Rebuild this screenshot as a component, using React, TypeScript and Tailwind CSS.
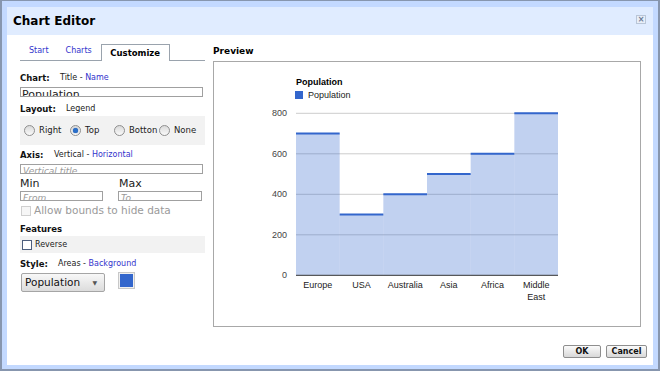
import React from 'react';

const UI = { fontFamily: '"DejaVu Sans", Verdana, sans-serif' };
const ARIAL = '"Liberation Sans", Arial, sans-serif';

const DATA = [
  { label: ['Europe'], value: 700 },
  { label: ['USA'], value: 300 },
  { label: ['Australia'], value: 400 },
  { label: ['Asia'], value: 500 },
  { label: ['Africa'], value: 600 },
  { label: ['Middle', 'East'], value: 800 },
];

function Radio({ checked, label, width }: { checked?: boolean; label: string; width: string }) {
  return (
    <div className={`flex items-center gap-[4px] ${width}`}>
      <span className="flex h-[11px] w-[11px] items-center justify-center rounded-full border border-[#8f8f8f] bg-gradient-to-b from-[#d9d9d9] to-[#fafafa]">
        {checked && <span className="h-[5px] w-[5px] rounded-full bg-[#2a6fc9] shadow-[0_0_1px_#1a4d9a]" />}
      </span>
      <span className="text-[8.5px] text-[#222]">{label}</span>
    </div>
  );
}

function Label({ title, children }: { title: string; children?: React.ReactNode }) {
  return (
    <div className="flex h-[12px] items-center leading-[12px]">
      <span className="w-[40px] shrink-0 text-[8.5px] font-bold text-[#111]">{title}</span>
      {children}
    </div>
  );
}

function Chart() {
  const left = 82;
  const bw = 262 / 6;
  const y = (v: number) => 213.3 - v * 0.2025;
  return (
    <svg width="428" height="264" viewBox="0 0 428 264" style={{ fontFamily: ARIAL }}>
      <text x="82" y="23" fontSize="9" fontWeight="bold" fill="#000">Population</text>
      <rect x="81" y="29" width="8" height="8" fill="#3366cc" />
      <text x="94" y="36" fontSize="9" fill="#222">Population</text>
      {[800, 600, 400, 200].map((v) => (
        <line key={v} x1={left} x2={344} y1={y(v)} y2={y(v)} stroke="#cccccc" strokeWidth="1" />
      ))}
      {[800, 600, 400, 200, 0].map((v) => (
        <text key={v} x="73" y={y(v) + 3} fontSize="9" textAnchor="end" fill="#444">
          {v}
        </text>
      ))}
      {DATA.map((d, i) => (
        <g key={i}>
          <rect x={left + i * bw} y={y(d.value)} width={bw} height={y(0) - y(d.value)} fill="#3366cc" fillOpacity="0.3" />
          <line x1={left + i * bw} x2={left + (i + 1) * bw} y1={y(d.value)} y2={y(d.value)} stroke="#3366cc" strokeWidth="2" />
          {d.label.map((l, j) => (
            <text key={l} x={left + i * bw + bw / 2} y={226 + j * 12} fontSize="9" textAnchor="middle" fill="#222">
              {l}
            </text>
          ))}
        </g>
      ))}
      <line x1={left} x2={344} y1={y(0)} y2={y(0)} stroke="#333" strokeWidth="1" />
    </svg>
  );
}

export default function App() {
  return (
    <div className="h-[373px] w-[660px] bg-white" style={UI}>
      <div className="flex h-[371px] w-[660px] flex-col border-x-2 border-t border-b-2 border-[#8796ae] bg-[#c3d9ff] px-[5px] pt-[6px] pb-[4px]">
        {/* Title bar */}
        <div className="flex h-[28px] items-center justify-between bg-[#e0ecff] pr-[7px] pl-[6px]">
          <span className="text-[12px] font-bold text-black">Chart Editor</span>
          <span className="mb-[3px] flex h-[9px] w-[10px] items-center justify-center border border-[#b9c6d8] bg-[#e8eef8] text-[8px] leading-none font-bold text-[#6a7a95]">
            ×
          </span>
        </div>

        {/* Body */}
        <div className="flex flex-1 flex-col bg-white pt-[9px] pr-[12px] pl-[13px]">
          <div className="flex items-start gap-[8px]">
            {/* Left column */}
            <div className="flex w-[185px] flex-col">
              <div className="flex h-[17px] items-end border-b border-[#9aa3ad] text-[8px]">
                <span className="mb-[3px] ml-[9px] text-[#3333cc]">Start</span>
                <span className="mb-[3px] ml-[17px] text-[#3333cc]">Charts</span>
                <span className="ml-[9px] -mb-px flex h-[17px] w-[69px] items-center justify-center border border-b-0 border-[#9aa3ad] bg-white text-[8.5px] font-bold text-black">
                  Customize
                </span>
              </div>

              <div className="mt-[11px]">
                <Label title="Chart:">
                  <span className="text-[8px] text-[#222]">
                    Title - <span className="text-[#3333cc]">Name</span>
                  </span>
                </Label>
              </div>
              <div className="mt-[3px] h-[10px] w-[183px] overflow-hidden border border-[#a0a0a0] pl-[1px] text-[11px] leading-[13px] text-[#222]">
                Population
              </div>

              <div className="mt-[6px]">
                <Label title="Layout:">
                  <span className="ml-[6px] text-[8px] text-[#222]">Legend</span>
                </Label>
              </div>
              <div className="mt-[1px] flex h-[29px] w-[185px] items-center bg-[#f2f2f2] pl-[4px]">
                <Radio label="Right" width="w-[46px]" />
                <Radio checked label="Top" width="w-[44px]" />
                <Radio label="Botton" width="w-[45px]" />
                <Radio label="None" width="w-[40px]" />
              </div>

              <div className="mt-[4px]">
                <Label title="Axis:">
                  <span className="-ml-[6px] text-[8px] text-[#222]">
                    Vertical - <span className="text-[#3333cc]">Horizontal</span>
                  </span>
                </Label>
              </div>
              <div className="mt-[3px] h-[10px] w-[183px] overflow-hidden border border-[#a0a0a0] pl-[2px] text-[9px] leading-[12px] text-[#999] italic">
                Vertical title
              </div>

              <div className="mt-[3px] flex h-[13px] items-center text-[11px] leading-[13px] text-[#222]">
                <span className="w-[99px]">Min</span>
                <span>Max</span>
              </div>
              <div className="mt-[1px] flex">
                <div className="h-[10px] w-[83px] overflow-hidden border border-[#a0a0a0] pl-[2px] text-[9px] leading-[12px] text-[#999] italic">
                  From
                </div>
                <div className="ml-[15px] h-[10px] w-[84px] overflow-hidden border border-[#a0a0a0] pl-[2px] text-[9px] leading-[12px] text-[#999] italic">
                  To
                </div>
              </div>

              <div className="mt-[4px] flex h-[12px] items-center">
                <span className="ml-[1px] h-[10px] w-[10px] border border-[#cfcfcf] bg-[#f6f6f6]" />
                <span className="ml-[3px] text-[10.5px] text-[#9a9a9a]">Allow bounds to hide data</span>
              </div>

              <div className="mt-[6px]">
                <Label title="Features" />
              </div>
              <div className="mt-[1px] flex h-[17px] w-[185px] items-center bg-[#f2f2f2] pl-[2px]">
                <span className="h-[10px] w-[10px] border border-[#4d5e7d] bg-white" />
                <span className="ml-[3px] text-[8px] text-[#222]">Reverse</span>
              </div>

              <div className="mt-[5px]">
                <Label title="Style:">
                  <span className="-ml-[2px] text-[8px] text-[#222]">
                    Areas - <span className="text-[#3333cc]">Background</span>
                  </span>
                </Label>
              </div>
              <div className="mt-[2px] flex items-start">
                <div className="mt-[1px] ml-[1px] flex h-[19px] w-[84px] items-center justify-between rounded-[2px] border border-[#a5a5a5] bg-gradient-to-b from-[#f8f8f8] to-[#dcdcdc] pr-[7px] pl-[3px]">
                  <span className="text-[10.5px] text-[#111]">Population</span>
                  <span className="text-[6px] text-[#555]">▼</span>
                </div>
                <div className="ml-[13px] flex h-[17px] w-[17px] items-center justify-center border border-[#c8c8c8] bg-[#f0f0f0]">
                  <span className="h-[13px] w-[13px] bg-[#3366cc]" />
                </div>
              </div>
            </div>

            {/* Right column */}
            <div className="flex flex-col pt-[1px]">
              <div className="h-[12px] text-[9px] leading-[12px] font-bold text-black">Preview</div>
              <div className="mt-[4px] h-[266px] w-[428px] border border-[#a8a8a8] bg-white">
                <Chart />
              </div>
            </div>
          </div>

          {/* Buttons */}
          <div className="mt-auto mb-[7px] flex justify-end gap-[5px] pr-[-6px]">
            <button className="h-[13px] w-[38px] rounded-[2px] border border-[#8e8e8e] bg-gradient-to-b from-[#fbfbfb] to-[#d8d8d8] text-[8px] leading-none font-bold text-[#111]">
              OK
            </button>
            <button className="-mr-[6px] h-[13px] w-[41px] rounded-[2px] border border-[#8e8e8e] bg-gradient-to-b from-[#fbfbfb] to-[#d8d8d8] text-[8px] leading-none font-bold text-[#111]">
              Cancel
            </button>
          </div>
        </div>
      </div>
    </div>
  );
}
